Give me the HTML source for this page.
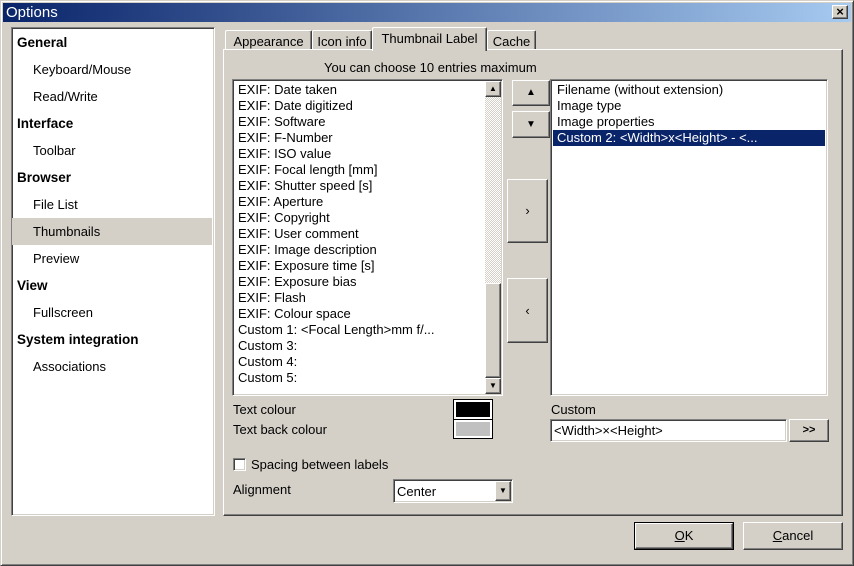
<!DOCTYPE html>
<html><head><style>
*{box-sizing:border-box;margin:0;padding:0}
body{width:854px;height:566px;background:#d4d0c8;font-family:"Liberation Sans",sans-serif;font-size:13px;color:#000;position:relative;overflow:hidden}
.a{position:absolute;white-space:nowrap}
.win{left:0;top:0;width:854px;height:566px;border:1px solid;border-color:#d4d0c8 #404040 #404040 #d4d0c8;box-shadow:inset 1px 1px #fff,inset -1px -1px #808080}
.title{left:3px;top:3px;width:848px;height:19px;background:linear-gradient(90deg,#0a246a,#a6caf0);color:#fff;font-size:15px;line-height:19px;padding-left:3px}
.sunk{border:1px solid;border-color:#808080 #fff #fff #808080;box-shadow:inset 1px 1px #404040,inset -1px -1px #d4d0c8;background:#fff}
.btn{border:1px solid;border-color:#fff #404040 #404040 #fff;box-shadow:inset -1px -1px #808080;background:#d4d0c8;text-align:center}
.tab{border:1px solid;border-color:#fff #404040 transparent #fff;border-bottom:none;box-shadow:inset -1px 0 #808080;padding:3px 0 0;text-align:center;border-radius:2px 2px 0 0;background:#d4d0c8}
.nav div{position:absolute;left:0;width:200px;height:27px;line-height:27px}
.b{font-weight:bold;padding-left:5px;font-size:13.5px}
.s{padding-left:21px}
.list div{height:16px;line-height:16px;padding-left:4px;white-space:nowrap}
.dith{background-color:#fff;background-image:linear-gradient(45deg,#d4d0c8 25%,transparent 25%,transparent 75%,#d4d0c8 75%),linear-gradient(45deg,#d4d0c8 25%,transparent 25%,transparent 75%,#d4d0c8 75%);background-size:2px 2px;background-position:0 0,1px 1px}
</style></head><body>
<div class="a win"></div>
<div class="a title">Options</div>
<div class="a btn" style="left:832px;top:5px;width:16px;height:14px;font-size:13px;line-height:11px;font-weight:bold">×</div>

<div class="a sunk nav" style="left:11px;top:27px;width:204px;height:489px">
<div class="b" style="top:1px">General</div>
<div class="s" style="top:28px">Keyboard/Mouse</div>
<div class="s" style="top:55px">Read/Write</div>
<div class="b" style="top:82px">Interface</div>
<div class="s" style="top:109px">Toolbar</div>
<div class="b" style="top:136px">Browser</div>
<div class="s" style="top:163px">File List</div>
<div class="s" style="top:190px;background:#d4d0c8">Thumbnails</div>
<div class="s" style="top:217px">Preview</div>
<div class="b" style="top:244px">View</div>
<div class="s" style="top:271px">Fullscreen</div>
<div class="b" style="top:298px">System integration</div>
<div class="s" style="top:325px">Associations</div>
</div>

<div class="a" style="left:223px;top:49px;width:620px;height:467px;border:1px solid;border-color:#fff #404040 #404040 #fff;box-shadow:inset -1px -1px #808080"></div>
<div class="a tab" style="left:225px;top:30px;width:87px;height:19px;padding-top:3px">Appearance</div>
<div class="a tab" style="left:312px;top:30px;width:60px;height:19px;padding-top:3px">Icon info</div>
<div class="a tab" style="left:487px;top:30px;width:49px;height:19px;padding-top:3px">Cache</div>
<div class="a tab" style="left:372px;top:27px;width:115px;height:24px;padding-top:3px">Thumbnail Label</div>

<div class="a" style="left:324px;top:60px">You can choose 10 entries maximum</div>

<div class="a sunk list" style="left:232px;top:79px;width:271px;height:317px;padding:2px 0 0 1px">
<div>EXIF: Date taken</div><div>EXIF: Date digitized</div><div>EXIF: Software</div><div>EXIF: F-Number</div><div>EXIF: ISO value</div><div>EXIF: Focal length [mm]</div><div>EXIF: Shutter speed [s]</div><div>EXIF: Aperture</div><div>EXIF: Copyright</div><div>EXIF: User comment</div><div>EXIF: Image description</div><div>EXIF: Exposure time [s]</div><div>EXIF: Exposure bias</div><div>EXIF: Flash</div><div>EXIF: Colour space</div><div>Custom 1: &lt;Focal Length&gt;mm f/...</div><div>Custom 3:</div><div>Custom 4:</div><div>Custom 5:</div>
</div>
<div class="a dith" style="left:485px;top:81px;width:16px;height:313px"></div>
<div class="a btn" style="left:485px;top:81px;width:16px;height:16px;font-size:8px;line-height:14px">▲</div>
<div class="a btn" style="left:485px;top:283px;width:16px;height:95px"></div>
<div class="a btn" style="left:485px;top:378px;width:16px;height:16px;font-size:8px;line-height:14px">▼</div>

<div class="a btn" style="left:512px;top:80px;width:38px;height:26px;font-size:10px;line-height:24px">▲</div>
<div class="a btn" style="left:512px;top:111px;width:38px;height:27px;font-size:10px;line-height:25px">▼</div>
<div class="a btn" style="left:507px;top:179px;width:41px;height:64px;line-height:62px">›</div>
<div class="a btn" style="left:507px;top:278px;width:41px;height:65px;line-height:63px">‹</div>

<div class="a sunk list" style="left:550px;top:79px;width:278px;height:317px;padding:2px 2px 0 2px">
<div>Filename (without extension)</div><div>Image type</div><div>Image properties</div><div style="background:#0a246a;color:#fff">Custom 2: &lt;Width&gt;x&lt;Height&gt; - &lt;...</div>
</div>

<div class="a" style="left:233px;top:402px">Text colour</div>
<div class="a" style="left:233px;top:422px">Text back colour</div>
<div class="a" style="left:453px;top:399px;width:40px;height:21px;border:1px solid #000;background:#fff;padding:2px"><div style="background:#000;width:100%;height:100%"></div></div>
<div class="a" style="left:453px;top:419px;width:40px;height:20px;border:1px solid #000;background:#fff;padding:2px"><div style="background:#c0c0c0;width:100%;height:100%"></div></div>

<div class="a" style="left:551px;top:402px">Custom</div>
<div class="a sunk" style="left:550px;top:419px;width:237px;height:23px;padding:3px 3px">&lt;Width&gt;×&lt;Height&gt;</div>
<div class="a btn" style="left:789px;top:419px;width:40px;height:23px;line-height:21px;font-weight:bold;font-size:11px">&gt;&gt;</div>

<div class="a sunk" style="left:233px;top:458px;width:13px;height:13px"></div>
<div class="a" style="left:251px;top:457px">Spacing between labels</div>
<div class="a" style="left:233px;top:482px">Alignment</div>
<div class="a sunk" style="left:393px;top:479px;width:120px;height:24px;padding:4px 3px">Center</div>
<div class="a btn" style="left:495px;top:481px;width:16px;height:20px;font-size:8px;line-height:18px">▼</div>

<div class="a" style="left:634px;top:522px;width:100px;height:28px;border:1px solid #000"><div class="btn" style="width:98px;height:26px;line-height:24px"><u>O</u>K</div></div>
<div class="a btn" style="left:743px;top:522px;width:100px;height:28px;line-height:26px"><u>C</u>ancel</div>
</body></html>
